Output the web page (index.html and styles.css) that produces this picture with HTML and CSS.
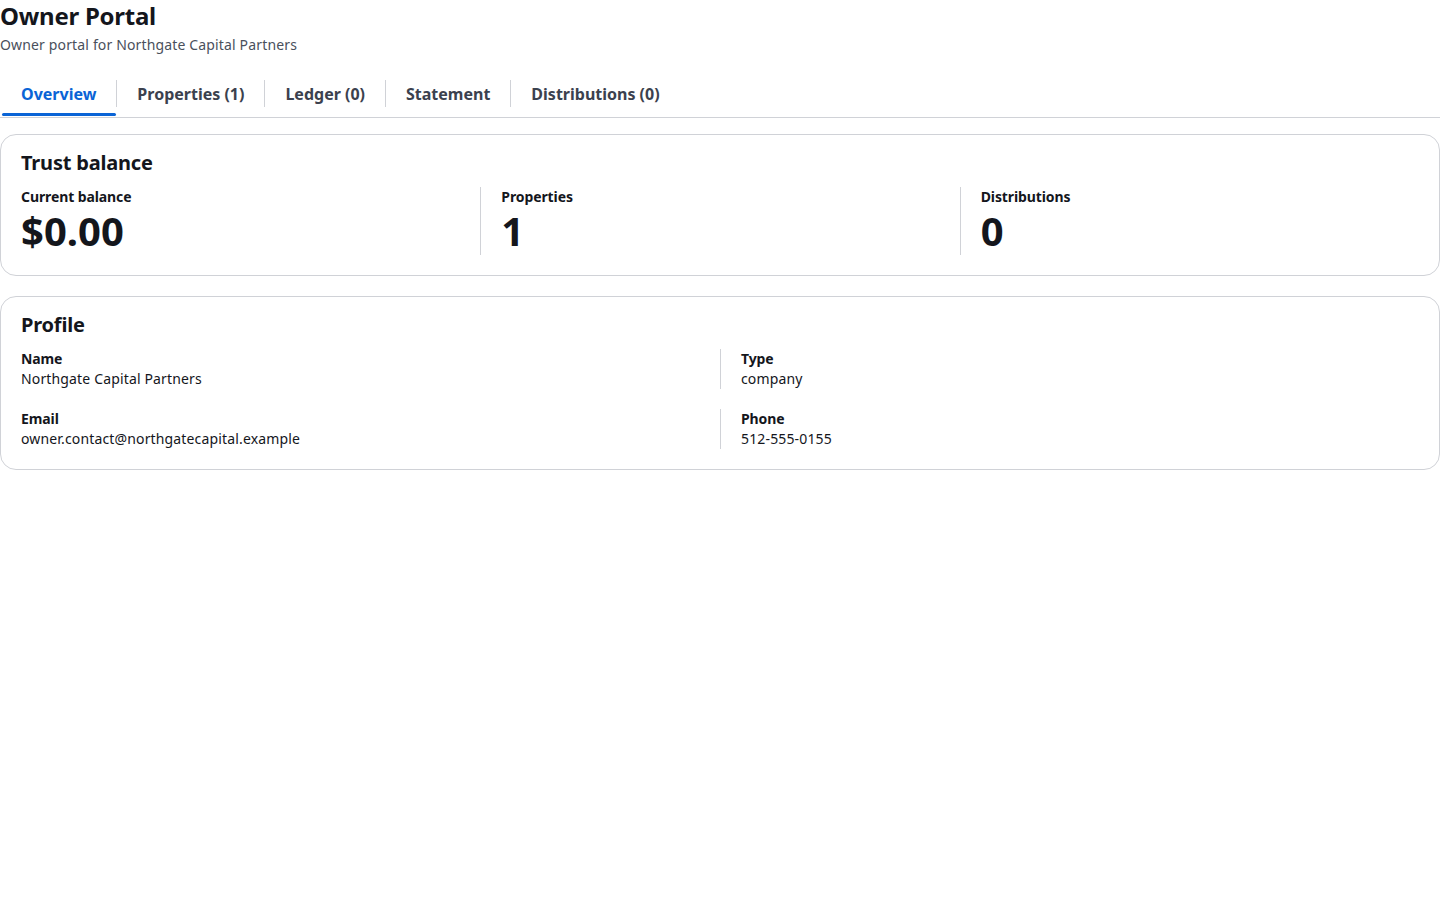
FILE: index.html
```html
<!DOCTYPE html>
<html lang="en">
<head>
  <meta charset="UTF-8">
  <meta name="viewport" content="width=device-width, initial-scale=1.0">
  <title>Owner Portal</title>
  <link rel="stylesheet" href="styles.css">
</head>
<body>
  <header class="page-header">
    <h1>Owner Portal</h1>
    <p class="subtitle">Owner portal for Northgate Capital Partners</p>
  </header>

  <nav class="tabs">
    <button class="tab active">Overview</button>
    <span class="tab-divider"></span>
    <button class="tab">Properties (1)</button>
    <span class="tab-divider"></span>
    <button class="tab">Ledger (0)</button>
    <span class="tab-divider"></span>
    <button class="tab">Statement</button>
    <span class="tab-divider"></span>
    <button class="tab">Distributions (0)</button>
  </nav>

  <section class="card">
    <h2>Trust balance</h2>
    <div class="stats">
      <div class="stat">
        <div class="stat-label">Current balance</div>
        <div class="stat-value">$0.00</div>
      </div>
      <div class="stat">
        <div class="stat-label">Properties</div>
        <div class="stat-value">1</div>
      </div>
      <div class="stat">
        <div class="stat-label">Distributions</div>
        <div class="stat-value">0</div>
      </div>
    </div>
  </section>

  <section class="card">
    <h2>Profile</h2>
    <div class="fields">
      <div class="field">
        <div class="field-label">Name</div>
        <div class="field-value">Northgate Capital Partners</div>
      </div>
      <div class="field">
        <div class="field-label">Type</div>
        <div class="field-value">company</div>
      </div>
      <div class="field">
        <div class="field-label">Email</div>
        <div class="field-value">owner.contact@northgatecapital.example</div>
      </div>
      <div class="field">
        <div class="field-label">Phone</div>
        <div class="field-value">512-555-0155</div>
      </div>
    </div>
  </section>
</body>
</html>
```

FILE: styles.css
```css
body {
  margin: 0;
  font-family: 'Noto Sans', 'Open Sans', sans-serif;
  color: #14161c;
  background-color: #fff;
}

h1 {
  margin: 0;
  font-size: 24px;
  line-height: 32px;
  font-weight: bold;
  letter-spacing: -0.25px;
}

.subtitle {
  margin: 3px 0 0;
  font-size: 14px;
  line-height: 20px;
  color: #4a505c;
  letter-spacing: 0.15px;
}

/* tab bar */
.tabs {
  display: flex;
  margin-top: 15px;
  padding-left: 1px;
  border-bottom: 1px solid #d0d2d7;
}

.tab {
  position: relative;
  padding: 12px 20px 11px;
  background: none;
  border: none;
  font-family: inherit;
  font-size: 16px;
  line-height: 24px;
  font-weight: bold;
  color: #3b414e;
  cursor: pointer;
}

.tab.active {
  color: #0a64d6;
}

.tab.active::after {
  content: "";
  position: absolute;
  left: 1px;
  right: 0;
  bottom: 1px;
  height: 3px;
  border-radius: 2px;
  background-color: #0a64d6;
}

.tab-divider {
  align-self: flex-start;
  width: 1px;
  height: 27px;
  margin-top: 10px;
  background-color: #d0d2d7;
}

/* cards */
.card {
  margin-top: 16px;
  padding: 16px 0 20px;
  border: 1px solid #d0d2d7;
  border-radius: 16px;
}

.card + .card {
  margin-top: 20px;
}

.card h2 {
  margin: 0 0 12px;
  padding: 0 20px;
  font-size: 20px;
  line-height: 24px;
  font-weight: bold;
  letter-spacing: -0.2px;
}

.stats {
  display: grid;
  grid-template-columns: repeat(3, 1fr);
}

.stat {
  padding: 0 20px;
}

.stat + .stat {
  border-left: 1px solid #d0d2d7;
}

.stat-label,
.field-label {
  font-size: 14px;
  line-height: 20px;
  font-weight: bold;
  letter-spacing: -0.1px;
}

.stat-value {
  font-size: 40px;
  line-height: 48px;
  font-weight: bold;
}

.fields {
  display: grid;
  grid-template-columns: repeat(2, 1fr);
  row-gap: 20px;
}

.field {
  padding: 0 20px;
}

.field:nth-child(even) {
  border-left: 1px solid #d0d2d7;
}

.field-value {
  font-size: 14px;
  line-height: 20px;
  letter-spacing: 0.15px;
}
```
